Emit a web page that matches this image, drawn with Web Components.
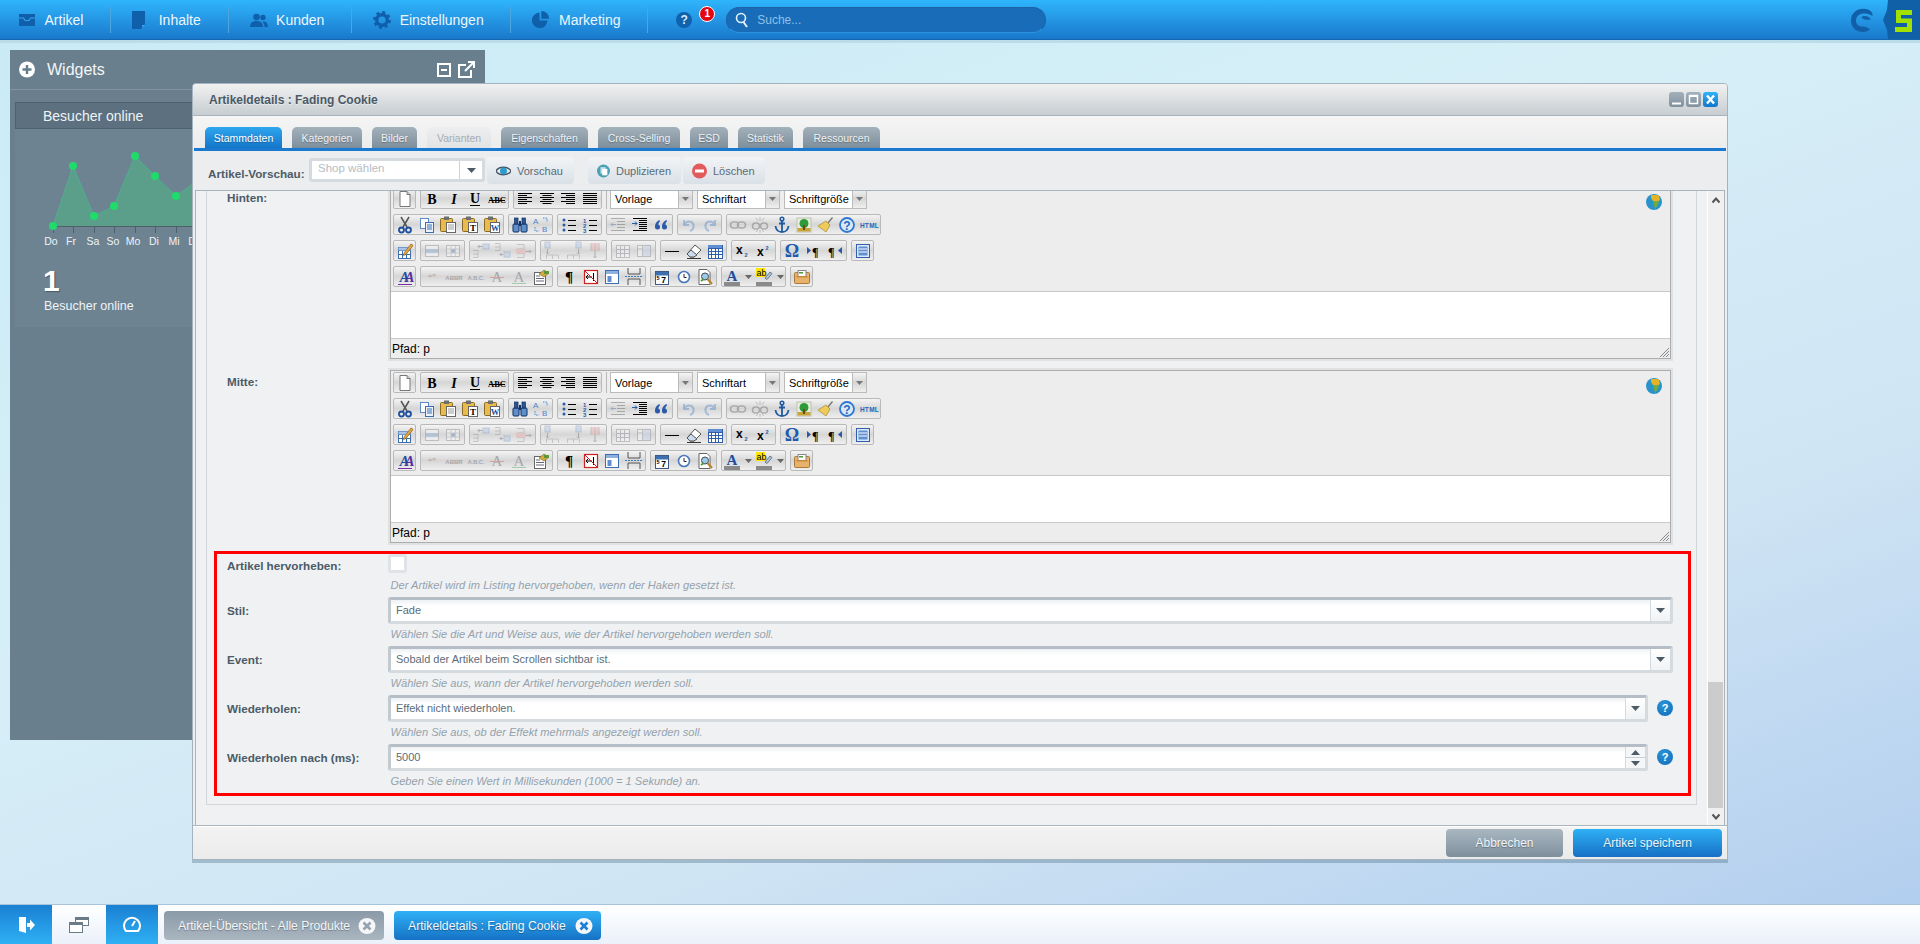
<!DOCTYPE html>
<html lang="de"><head><meta charset="utf-8"><title>Artikeldetails</title>
<style>
html,body{margin:0;height:944px;overflow:hidden}
body{display:flex;flex-direction:column;font-family:"Liberation Sans",Arial,sans-serif;font-size:11px;background:linear-gradient(160deg,#c9ebf6 0%,#d6eff7 40%,#d0e5f4 68%,#b0ccee 100%)}
</style></head><body>
<sw-topbar></sw-topbar>
<sw-desktop>
  <sw-widgets></sw-widgets>
  <sw-window heading="Artikeldetails : Fading Cookie">
    <sw-tabs slot="tabs"></sw-tabs>
    <sw-previewbar slot="toolbar"></sw-previewbar>
    <sw-fieldset>
      <sw-editor-row label="Hinten:"><sw-editor></sw-editor></sw-editor-row>
      <sw-editor-row label="Mitte:"><sw-editor></sw-editor></sw-editor-row>
      <sw-highlight>
        <sw-field kind="check" label="Artikel hervorheben:" hint="Der Artikel wird im Listing hervorgehoben, wenn der Haken gesetzt ist."></sw-field>
        <sw-field kind="select" label="Stil:" value="Fade" hint="Wählen Sie die Art und Weise aus, wie der Artikel hervorgehoben werden soll."></sw-field>
        <sw-field kind="select" label="Event:" value="Sobald der Artikel beim Scrollen sichtbar ist." hint="Wählen Sie aus, wann der Artikel hervorgehoben werden soll."></sw-field>
        <sw-field kind="select" help label="Wiederholen:" value="Effekt nicht wiederholen." hint="Wählen Sie aus, ob der Effekt mehrmals angezeigt werden soll."></sw-field>
        <sw-field kind="number" help label="Wiederholen nach (ms):" value="5000" hint="Geben Sie einen Wert in Millisekunden (1000 = 1 Sekunde) an."></sw-field>
      </sw-highlight>
    </sw-fieldset>
  </sw-window>
</sw-desktop>
<sw-taskbar></sw-taskbar>
<script>
const FONT='"Liberation Sans",Arial,sans-serif';
function el(name,css,html,init){customElements.define(name,class extends HTMLElement{
  connectedCallback(){ if(this.shadowRoot)return; const r=this.attachShadow({mode:'open'});
    r.innerHTML=`<style>${css}</style>`+(typeof html==='function'?html(this):html); if(init)init(this,r);} });}

/* ---------- top bar ---------- */
const NAVC='#0f5fab';
const NAV={
 tray:`<svg width="18" height="14" viewBox="0 0 18 14"><path d="M1 1h16v12H1z" fill="${NAVC}"/><path d="M1 5h4.500l1.500 2.500h4L12.500 5H17" fill="none" stroke="#3a9fe8" stroke-width="1.200"/></svg>`,
 page:`<svg width="14" height="18" viewBox="0 0 14 18"><path d="M0 0h13v13l-4 5H0z" fill="${NAVC}"/><path d="M13 14h-3v3z" fill="#3a9fe8"/></svg>`,
 users:`<svg width="18" height="14" viewBox="0 0 18 14"><circle cx="6.500" cy="4" r="3.300" fill="${NAVC}"/><path d="M0 14c0-4 2.500-6 6.500-6s6.500 2 6.500 6z" fill="${NAVC}"/><circle cx="13" cy="4.500" r="2.700" fill="${NAVC}"/><path d="M13.500 8.500c3 0 4.500 2 4.500 5.500h-3.500c0-2-.5-4-1.800-5z" fill="${NAVC}"/></svg>`,
 gear:`<svg width="18" height="18" viewBox="0 0 18 18"><circle cx="9" cy="9" r="5.300" fill="none" stroke="${NAVC}" stroke-width="3.400"/><circle cx="9" cy="9" r="7.600" fill="none" stroke="${NAVC}" stroke-width="2.600" stroke-dasharray="3 2.970"/></svg>`,
 pie:`<svg width="17" height="17" viewBox="0 0 17 17"><path d="M7.500 1.500V9.500H15.500A7.800 7.800 0 1 1 7.500 1.500z" fill="${NAVC}"/><path d="M9.300 0A7.800 7.800 0 0 1 17 7.800H9.300z" fill="${NAVC}"/></svg>`};
el('sw-nav-item',`:host{display:flex;align-items:center;height:26px;padding:0 26.800px 0 21px;border-right:1px solid #4fa5e0;color:#edf6fd;font-size:14px}
 :host(:first-child){padding-left:18px}
 i{display:flex;width:26.500px;align-items:center;flex:none}`,
 t=>`<i>${NAV[t.getAttribute('icon')]}</i><span><slot></slot></span>`);
el('sw-topbar',`:host{display:block;height:43px;flex:none;font-family:${FONT}}
 .bar{height:39px;display:flex;align-items:center;background:linear-gradient(#2fb5fc,#1a78cb);border-bottom:1px solid #1267b0}
 .band{height:3px;background:#bcdcea}
 .help{margin-left:28px;width:16px;height:16px;border-radius:50%;background:#0f62ad;color:#dcecf9;font:bold 12px/16px ${FONT};text-align:center;flex:none}
 .badge{margin:-11px 0 0 7px;width:14px;height:14px;border-radius:50%;background:#e30613;border:1px solid #fff;color:#fff;font:bold 10px/14px ${FONT};text-align:center;flex:none}
 .search{margin-left:11px;width:320px;height:26px;box-sizing:border-box;border-radius:13px;background:#186cb8;border:1px solid #1c63a8;border-bottom-color:#2d92e4;display:flex;align-items:center;color:#8fc0e8;font-size:12px;flex:none}
 .search svg{margin:0 8px 0 8px}
 .logo{margin-left:auto;display:flex;align-items:center;height:39px}
 .s5{margin-left:7px}`,
 `<div class="bar">
  <sw-nav-item icon="tray">Artikel</sw-nav-item><sw-nav-item icon="page">Inhalte</sw-nav-item><sw-nav-item icon="users">Kunden</sw-nav-item><sw-nav-item icon="gear">Einstellungen</sw-nav-item><sw-nav-item icon="pie">Marketing</sw-nav-item>
  <div class="help">?</div><div class="badge">1</div>
  <div class="search"><svg width="14" height="16" viewBox="0 0 14 16"><circle cx="6" cy="6" r="4.500" fill="none" stroke="#e6f2fb" stroke-width="1.600"/><path d="M8.500 10l3.500 5" stroke="#e6f2fb" stroke-width="2"/></svg>Suche...</div>
  <div class="logo"><svg width="25" height="24" viewBox="0 0 25 24"><path d="M17 1.500C8 -1 0 4 0 12.500c0 7 5.500 11.500 12 11.500 3 0 5-1 7-2.500-2-1.800-5-3-8-3-4 0-6-2.500-6-6 0-4 3.500-7 7.500-7 3 0 6 .5 9 2.500 .5-3-1.500-5.500-4.500-6.500zM11 8.500c3-1.500 7 0 8.500 2.500.5 1-3 1-5.500.5-2.500-.5-4.500-2-3-3z" fill="#115fa9"/></svg>
  <svg class="s5" width="37" height="39" viewBox="0 0 37 39"><path d="M5 0h32v39H5l-1-9-4-10 4-10z" fill="#1060a8"/><path d="M13 10H29V15H18V18.500H29V32H12V27H24V23H13Z" fill="#a2e000"/></svg></div>
 </div><div class="band"></div>`);

/* ---------- desktop ---------- */
el('sw-desktop',`:host{display:block;flex:1;position:relative;min-height:0}`,`<slot></slot>`);

/* ---------- widgets ---------- */
el('sw-widgets',`:host{position:absolute;left:10px;top:7px;width:475px;height:690px;background:#697f8e;color:#fff;font-family:${FONT}}
 header{height:39px;border-bottom:1px solid #81939f;display:flex;align-items:center;padding:0 10px 0 9px;font-size:16px;color:#f2f6f8}
 header .t{margin-left:12px;flex:1}
 header svg{display:block}
 .in{margin:12px 5px 0;height:225px;background:#6d8392}
 .sub{height:27px;box-sizing:border-box;background:#5c707f;border:1px solid #4e616e;line-height:27px;padding-left:27px;font-size:14px;color:#eef3f6}
 svg.c{display:block}
 .n{font:bold 30px/30px ${FONT};padding-left:28px;margin-top:17px;text-shadow:1px 1px 1px rgba(30,50,70,.5)}
 .l{font-size:12.500px;line-height:14px;padding-left:29px;margin-top:3px;color:#eef3f6}`,
 ()=>{const p=[[38,97],[58,37],[79,87],[99,77],[120,27],[140,47],[161,67],[182,52],[202,67],[224,40],[245,85]];
  const lab=['Do','Fr','Sa','So','Mo','Di','Mi','Do','Fr','Sa','So'],lx=[36,56,78,98,118,139,159,180,200,222,243];
  const pts=p.map(a=>a.join(',')).join(' ');
  return `<header><svg width="16" height="17" viewBox="0 0 16 17"><circle cx="8" cy="8.500" r="8" fill="#fff"/><path d="M8 4v9M3.500 8.500h9" stroke="#667d8c" stroke-width="2.400"/></svg><span class="t">Widgets</span>
  <svg width="14" height="14" viewBox="0 0 14 14" style="margin-right:7px"><rect x="1" y="1" width="12" height="12" fill="none" stroke="#fff" stroke-width="2"/><path d="M4 7h6" stroke="#fff" stroke-width="2"/></svg>
  <svg width="17" height="17" viewBox="0 0 17 17"><path d="M8 4H1v12h12V9" fill="none" stroke="#fff" stroke-width="2"/><path d="M7 10l8-8M10 1h6v6" fill="none" stroke="#fff" stroke-width="2"/></svg></header>
  <div class="in"><div class="sub">Besucher online</div>
  <svg class="c" width="465" height="120" viewBox="0 0 465 120"><polygon points="38,97 ${pts} 245,97" fill="#5b9f8a"/><polyline points="${pts}" fill="none" stroke="#4fae8e"/>
  <path d="M38 97.500H300" stroke="#4d5f6b"/>${p.map(a=>`<path d="M${a[0]+.5} 97V104" stroke="#4d5f6b"/>`).join('')}
  ${p.map(a=>`<circle cx="${a[0]}" cy="${a[1]}" r="4" fill="#1edb6a"/>`).join('')}
  ${lab.map((t,i)=>`<text x="${lx[i]}" y="116" text-anchor="middle" font-size="10.500" fill="#eef3f6" font-family="Liberation Sans">${t}</text>`).join('')}</svg>
  <div class="n">1</div><div class="l">Besucher online</div></div>`});

/* ---------- window ---------- */
const WB=`width:15px;height:15px;border-radius:3px;display:flex;align-items:center;justify-content:center`;
el('sw-window',`:host{position:absolute;left:192px;top:40px;width:1536px;height:777px;box-sizing:border-box;border:1px solid #a3b3bf;border-radius:4px 4px 0 0;background:#eceef0;box-shadow:0 3px 0 rgba(60,95,120,.32);display:flex;flex-direction:column;font-family:${FONT}}
 .ti{height:32px;box-sizing:border-box;flex:none;display:flex;align-items:center;padding:0 9px 0 16px;background:linear-gradient(#f1f1f1,#c7cdd1);border-bottom:1px solid #a9b5be;font:bold 12px ${FONT};color:#4a5965;border-radius:3px 3px 0 0;text-shadow:0 1px 0 rgba(255,255,255,.5)}
 .ti span{flex:1}
 .ti div{margin-left:2px}
 .m{${WB};background:linear-gradient(#a3b1bc,#7f909d)}
 .x{${WB};background:linear-gradient(#2fb2fb,#1076cd);color:#fff}
 .body{flex:1;min-height:0;display:flex;margin:0 2px 0 2px;border:1px solid #a9b5be;border-bottom:0;background:#f0f1f3}
 .sc{flex:1;min-width:0;overflow:hidden;padding:0 10px}
 .bar{width:17px;flex:none;display:flex;flex-direction:column;border-left:1px solid #fff;background:#f0f0f0;box-sizing:border-box}
 .bar .ar{height:17px;display:flex;align-items:center;justify-content:center;flex:none}
 .bar .tr{flex:1;display:flex;flex-direction:column;justify-content:flex-end}
 .bar .th{height:126px;background:#ccc;margin-right:1px}
 .ft{height:34px;box-sizing:border-box;flex:none;border-top:1px solid #a9b5be;background:linear-gradient(#f3f3f4,#ebebec);box-shadow:inset 0 1px 0 #fff;display:flex;justify-content:flex-end;align-items:center;padding:1px 5px 0 0}
 .b{height:28px;border-radius:4px;color:#eef5fb;font-size:12px;display:flex;align-items:center;justify-content:center;text-shadow:0 1px 1px rgba(0,0,0,.3)}
 .ab{width:117px;background:linear-gradient(#aab7c1,#7e8f9c);margin-right:10px}
 .sv{width:149px;background:linear-gradient(#2fb0f5,#1670c5)}`,
 t=>`<div class="ti"><span>${t.getAttribute('heading')}</span>
 <div class="m"><svg width="11" height="11"><path d="M1 9.500h9" stroke="#fff" stroke-width="2"/></svg></div>
 <div class="m"><svg width="11" height="11"><rect x="1.500" y="1.500" width="8" height="8" fill="none" stroke="#fff" stroke-width="1.500"/><path d="M1 2h9" stroke="#fff" stroke-width="2"/></svg></div>
 <div class="x"><svg width="11" height="11"><path d="M2 1.500l7 8M9 1.500l-7 8" stroke="#fff" stroke-width="2.400"/></svg></div></div>
 <slot name="tabs"></slot><slot name="toolbar"></slot>
 <div class="body"><div class="sc"><slot></slot></div>
  <div class="bar"><div class="ar"><svg width="10" height="8"><path d="M1.500 6.500L5 2.500l3.500 4" fill="none" stroke="#555" stroke-width="2"/></svg></div><div class="tr"><div class="th"></div></div><div class="ar"><svg width="10" height="8"><path d="M1.500 1.500L5 5.500l3.500-4" fill="none" stroke="#555" stroke-width="2"/></svg></div></div></div>
 <div class="ft"><div class="b ab">Abbrechen</div><div class="b sv">Artikel speichern</div></div>`);

el('sw-tab',`:host{display:block;height:21px;box-sizing:border-box;text-align:center;line-height:23px;font-size:10.500px;border-radius:5px 5px 0 0;color:#eef2f5;background:linear-gradient(#a3b1bb,#7d8e9b);text-shadow:0 1px 1px rgba(0,0,0,.25);flex:none}
 :host([active]){background:linear-gradient(#2ea6f0,#1476c8);color:#fff}
 :host([disabled]){background:linear-gradient(#eceeef,#e1e3e5);color:#a6adb3;text-shadow:none}`,`<slot></slot>`);
el('sw-tabs',`:host{display:flex;height:35px;box-sizing:border-box;flex:none;background:linear-gradient(#f5f5f5,#eaebec);padding-top:11px}
 .s{display:flex;gap:10px;padding-left:11px;margin:0 1px;border-bottom:3px solid #1a7ad0;flex:1;height:21px}`,
 `<div class="s"><sw-tab active style="width:77px">Stammdaten</sw-tab><sw-tab style="width:70px">Kategorien</sw-tab><sw-tab style="width:45px">Bilder</sw-tab><sw-tab disabled style="width:64px">Varianten</sw-tab><sw-tab style="width:87px">Eigenschaften</sw-tab><sw-tab style="width:82px">Cross-Selling</sw-tab><sw-tab style="width:38px">ESD</sw-tab><sw-tab style="width:55px">Statistik</sw-tab><sw-tab style="width:77px">Ressourcen</sw-tab></div>`);

el('sw-tool-btn',`:host{display:flex;align-items:center;height:27px;box-sizing:border-box;padding:0 10px 0 9px;border-radius:4px;background:linear-gradient(#f2f4f6,#d9e0e7);color:#5a6b78;font-size:11px}
 ::slotted(svg){margin-right:6px}`,`<slot name="i"></slot><slot></slot>`);
el('sw-previewbar',`:host{display:flex;height:39px;flex:none;box-sizing:border-box;background:#ecedef;padding:6px 0 0 15px;align-items:flex-start;font-family:${FONT}}
 .lb{font:bold 11.700px/14px ${FONT};color:#4d5c68;margin-top:10px;width:101px;white-space:nowrap}
 .co{width:176px;height:24px;margin-top:1px;box-sizing:border-box;border:3px solid #d5dadf;border-radius:3px;background:#fff;display:flex;color:#b5bdc4;font-size:11.500px;line-height:15px}
 .co span{flex:1;padding-left:6px}
 .co i{width:22px;border-left:1px solid #ccd2d8;display:flex;align-items:center;justify-content:center}
 sw-tool-btn{flex:none}`,
 `<div class="lb">Artikel-Vorschau:</div><div class="co"><span>Shop wählen</span><i><svg width="9" height="5"><path d="M0 0h9L4.500 5z" fill="#4d5b66"/></svg></i></div>
 <sw-tool-btn style="margin-left:2px;width:87px"><svg slot="i" width="15" height="12" viewBox="0 0 15 12"><path d="M0 6c3-5 12-5 15 0-3 5-12 5-15 0z" fill="none" stroke="#44525e" stroke-width="1.300"/><circle cx="7.500" cy="6" r="3.500" fill="#2e9bd0"/></svg>Vorschau</sw-tool-btn>
 <sw-tool-btn style="margin-left:14px;width:93px"><svg slot="i" width="15" height="18" viewBox="0 0 15 18"><circle cx="7.500" cy="9" r="7.500" fill="#4aa1b4"/><rect x="4" y="4.500" width="6" height="7.500" fill="#bfe0e8"/><rect x="6" y="6.500" width="6" height="7.500" fill="#fff"/></svg>Duplizieren</sw-tool-btn>
 <sw-tool-btn style="margin-left:2px;width:82px"><svg slot="i" width="15" height="18" viewBox="0 0 15 18"><circle cx="7.500" cy="9" r="7.500" fill="#e25a5c"/><rect x="3" y="7.500" width="9" height="3" fill="#fff"/></svg>Löschen</sw-tool-btn>`);

/* ---------- form ---------- */
el('sw-fieldset',`:host{display:block;margin-top:-8px;border:1px solid #d2d5d9;width:1491px;box-sizing:border-box;padding-top:0;font-family:${FONT}}`,`<slot></slot>`);
el('sw-editor-row',`:host{display:grid;grid-template-columns:181px 1fr;margin:0 23px 7px 0}
 :host(:first-child){margin-top:0}
 label{font:bold 11.700px/14px ${FONT};color:#4b5b68;padding:7px 0 0 20px}`,
 t=>`<label>${t.getAttribute('label')}</label><slot></slot>`);
el('sw-highlight',`:host{display:block;margin:-1px 5px 8px 7px;border:3px solid #f00;padding:0 15px 0 10px}`,`<slot></slot>`);
el('sw-field',`:host{display:grid;grid-template-columns:161px 1fr;align-content:start;height:49px;font-size:11px}
 :host([kind=check]){height:43px}
 label{font:bold 11.700px/28px ${FONT};color:#4b5b68;white-space:nowrap}
 :host([kind=check]) label{line-height:24px}
 .r{display:flex;align-items:flex-start}
 .ctl{flex:1;height:27px;box-sizing:border-box;border:3px solid;border-color:#b5bec6 #d5dadf #d5dadf #c2cad0;border-radius:3px;display:flex;background:#fff}
 .in{flex:1;background:linear-gradient(#eef1f3,#fff 6px);padding-left:5px;line-height:20px;color:#5c6c79;font-size:11px}
 .tr{width:19px;display:flex;align-items:center;justify-content:center;border-left:1px solid #d5dadf;background:linear-gradient(#fff,#f0f2f4);flex:none}
 .sp{width:19px;display:flex;flex-direction:column;border-left:1px solid #d5dadf;flex:none}
 .sp div{flex:1;display:flex;align-items:center;justify-content:center;background:#f5f6f7}
 .sp div+div{border-top:1px solid #c8ced3}
 .help{width:16px;height:16px;margin:5px 0 0 9px;flex:none;border-radius:50%;background:radial-gradient(circle at 40% 30%,#2b93d8,#0f6bb5);color:#fff;font:bold 11px/16px ${FONT};text-align:center}
 .ck{width:19px;height:19px;box-sizing:border-box;border:3px solid #dfe3e7;border-radius:3px;background:#fff}
 .h{grid-column:2;font-style:italic;color:#94a2ad;line-height:14px;margin-top:2px;padding-left:2.500px;font-size:11.100px}
 :host([kind=check]) .h{margin-top:0}`,
 t=>{const k=t.getAttribute('kind'),a=`<svg width="9" height="5"><path d="M0 0h9L4.500 5z" fill="#4d5b66"/></svg>`;
  const c=k==='check'?`<div class="ck"></div>`:`<div class="ctl"><div class="in">${t.getAttribute('value')}</div>`+(k==='select'?`<div class="tr">${a}</div>`:`<div class="sp"><div><svg width="9" height="5"><path d="M0 5h9L4.500 0z" fill="#4d5b66"/></svg></div><div>${a}</div></div>`)+`</div>`;
  return `<label>${t.getAttribute('label')}</label><div class="r">${c}${t.hasAttribute('help')?'<div class="help">?</div>':''}</div><div class="h">${t.getAttribute('hint')}</div>`});

/* ---------- editor icons ---------- */
const ff='font-family="Liberation Sans"', fs='font-family="Liberation Serif"';
const tx=(x,y,s,t,c='#000',x2='')=>`<text x="${x}" y="${y}" font-size="${s}" fill="${c}" ${ff} ${x2}>${t}</text>`;
const ln=(y,a,b,c='#000')=>`<path d="M${a} ${y+.5}H${b}" stroke="${c}"/>`;
const ali=(m,w)=>[4,6,8,10,12,14].map((y,i)=>{const l=i%2?w:14;const x=m==='c'?3+(14-l)/2:m==='r'?17-l:3;return ln(y,x,x+l)}).join('');
const clip=(inner='')=>`<rect x="2.500" y="3.500" width="12" height="13" rx="1" fill="#e8bb4c" stroke="#8a6a25"/><rect x="6" y="1.500" width="5" height="3.500" fill="#6e6e6e"/><rect x="8.500" y="7.500" width="9" height="10" fill="#fff" stroke="#666"/>${inner}`;
const grid=(x,y,w,h,c,n=3,m=3)=>{let s=`<rect x="${x+.5}" y="${y+.5}" width="${w}" height="${h}" fill="#fff" stroke="${c}"/>`;for(let i=1;i<n;i++)s+=`<path d="M${(x+i*w/n|0)+.5} ${y}v${h}" stroke="${c}"/>`;for(let i=1;i<m;i++)s+=`<path d="M${x} ${(y+i*h/m|0)+.5}h${w}" stroke="${c}"/>`;return s};
const ICON={
 doc:`<path d="M5 2.500h7l3 3v12H5z" fill="#fff" stroke="#777"/><path d="M12 2.500v3h3" fill="#ddd" stroke="#777"/>`,
 b:`<text x="10" y="15" text-anchor="middle" font-size="14" font-weight="bold" ${fs}>B</text>`,
 i:`<text x="10" y="15" text-anchor="middle" font-size="14" font-weight="bold" font-style="italic" ${fs}>I</text>`,
 u:`<text x="10" y="14" text-anchor="middle" font-size="14" font-weight="bold" ${fs}>U</text><path d="M5 16.500h10" stroke="#000"/>`,
 s:`<text x="10" y="14" text-anchor="middle" font-size="8.500" font-weight="bold" ${fs}>ABC</text><path d="M2 11.500h16" stroke="#000"/>`,
 al:ali('l',9),ac:ali('c',9),ar:ali('r',9),aj:ali('l',14),
 cut:`<path d="M6 2l6 10M14 2L8 12" stroke="#555" stroke-width="1.500"/><circle cx="6.500" cy="15" r="2.500" fill="none" stroke="#1d4f9e" stroke-width="1.800"/><circle cx="13.500" cy="15" r="2.500" fill="none" stroke="#1d4f9e" stroke-width="1.800"/>`,
 copy:`<rect x="3.500" y="3.500" width="8" height="10" fill="#fff" stroke="#5d8ac4"/><rect x="8.500" y="7.500" width="8" height="10" fill="#eaf2fb" stroke="#3d6eb0"/><path d="M10 10h5M10 12h5M10 14h5" stroke="#3d6eb0"/>`,
 paste:clip(`<path d="M10 10h6M10 12h6M10 14h6" stroke="#999"/>`),
 pastet:clip(`<text x="13" y="16" text-anchor="middle" font-size="9" font-weight="bold" ${fs}>T</text>`),
 pastew:clip(`<text x="13" y="16" text-anchor="middle" font-size="8.500" font-weight="bold" fill="#1d4f9e" ${fs}>W</text>`),
 find:`<rect x="3" y="9" width="6" height="8" rx="1" fill="#5f8fc8" stroke="#0f2f66"/><rect x="11" y="9" width="6" height="8" rx="1" fill="#5f8fc8" stroke="#0f2f66"/><rect x="4.500" y="3" width="3.500" height="6" fill="#2a5590" stroke="#0f2f66" stroke-width=".7"/><rect x="12" y="3" width="3.500" height="6" fill="#2a5590" stroke="#0f2f66" stroke-width=".7"/><rect x="9" y="6" width="2" height="5" fill="#0f2f66"/>`,
 replace:tx(2,9,8,'A','#4a86d0')+tx(11,17,8,'B','#4a86d0')+`<path d="M12 3h4v4M4 12v4h4" fill="none" stroke="#4a86d0" stroke-dasharray="1.500 1"/>`,
 bul:[5,10,15].map(y=>`<circle cx="5" cy="${y}" r="1.500" fill="#2a5aa8"/>`+ln(y,9,17)).join(''),
 num:[1,2,3].map((n,i)=>tx(3,8+i*5,6,n,'#2a5aa8','font-weight="bold"')+ln(5+i*5,9,17)).join(''),
 out:[3,6,9,12,15].map((y,i)=>ln(y,i==0||i==4?3:9,17,'#444')).join('')+`<path d="M8 9.500H3l2-2M3 9.500l2 2" fill="none" stroke="#2a5aa8"/>`,
 ind:[3,5,7,9,11,13,15].map((y,i)=>ln(y,i==0||i==6?3:9,17)).join('')+`<path d="M2 8.500h5l-2-2M7 8.500l-2 2" fill="none" stroke="#2a5aa8"/>`,
 quote:[4,11].map(x=>`<g transform="translate(${x} 5)"><circle cx="2.500" cy="7" r="2.500" fill="#2a5aa8"/><path d="M0 7C0 3 2 1 4.500 0L5 1.500C3.500 2.500 3 4 3.500 6z" fill="#2a5aa8"/></g>`).join(''),
 undo:`<path d="M5 5v5h5M5.500 9.500c2-4 8-4 9 .5.500 3-1 5-3.500 6" fill="none" stroke="#3d78c8" stroke-width="2"/>`,
 redo:`<path d="M15 5v5h-5M14.500 9.500c-2-4-8-4-9 .5-.5 3 1 5 3.500 6" fill="none" stroke="#3d78c8" stroke-width="2"/>`,
 link:`<rect x="2.500" y="7" width="8" height="6" rx="3" fill="none" stroke="#555" stroke-width="1.500"/><rect x="9.500" y="7" width="8" height="6" rx="3" fill="none" stroke="#555" stroke-width="1.500"/>`,
 unlink:`<rect x="2.500" y="8" width="7" height="6" rx="3" fill="none" stroke="#555" stroke-width="1.500"/><rect x="10.500" y="8" width="7" height="6" rx="3" fill="none" stroke="#555" stroke-width="1.500"/><path d="M10 2v4M6 3l2 3M14 3l-2 3M10 15v3M6 17l2-2M14 17l-2-2" stroke="#777"/>`,
 anchor:`<circle cx="10" cy="4" r="1.800" fill="none" stroke="#1d5a9e" stroke-width="1.500"/><path d="M10 6v11M7 8.500h6" stroke="#1d5a9e" stroke-width="1.800"/><path d="M3.500 11c.5 4 3 6 6.500 6s6-2 6.500-6" fill="none" stroke="#1d5a9e" stroke-width="1.800"/>`,
 image:`<rect x="3" y="3" width="14" height="14" fill="#e9eedc" stroke="#b8c4b0"/><rect x="3.500" y="13" width="13" height="3.500" fill="#c9a23a"/><circle cx="10" cy="8.500" r="4.500" fill="#2f9a3a"/><path d="M10 10v5" stroke="#6a4a1a" stroke-width="2"/>`,
 clean:`<path d="M12 8l5-6 1 1-5 6z" fill="#777"/><path d="M11 6l4 4-4 7-8-6z" fill="#eecb5a" stroke="#a88a2a" stroke-width=".7"/>`,
 help:`<circle cx="10" cy="10" r="7" fill="#d8e8f8" stroke="#2f78d0" stroke-width="1.800"/><text x="10" y="14.500" text-anchor="middle" font-size="12" font-weight="bold" fill="#2468c0" ${ff}>?</text>`,
 html:`<text x="10.500" y="13" text-anchor="middle" font-size="6.500" font-weight="bold" fill="#2a66b8" ${ff} letter-spacing=".3">HTML</text>`,
 tabedit:grid(3,6,12,11,'#3d6eb0')+`<rect x="3.500" y="6.500" width="12" height="3" fill="#a9c4e8"/><path d="M9 12l7-9 2 1.500-7 9-2.500 1z" fill="#e8a93c" stroke="#8a5a20" stroke-width=".7"/>`,
 trow:`<rect x="3.500" y="4.500" width="13" height="11" fill="#fff" stroke="#778"/><rect x="4" y="8" width="12" height="4" fill="#7a9cd0"/>`,
 tcell:`<rect x="3.500" y="4.500" width="13" height="11" fill="#fff" stroke="#778"/><rect x="8" y="8" width="4.500" height="4" fill="#4a74b8"/><path d="M4 8h12M4 12h12M8 5v10M12.500 5v10" stroke="#aab"/>`,
 irb:`<path d="M2 9.500h5v7H2M2 13h5" fill="none" stroke="#888"/><path d="M11 5.500H7m1.500-1.500L7 5.500 8.500 7" fill="none" stroke="#555"/><rect x="12" y="3" width="6" height="5" fill="#a9c4e8" stroke="#6a8ac0"/>`,
 ira:`<path d="M2 2.500h5v7H2M2 6h5" fill="none" stroke="#888"/><path d="M10 13.500H7m1.500-1.500L7 13.500 8.500 15" fill="none" stroke="#555"/><rect x="11" y="11" width="6" height="5" fill="#a9c4e8" stroke="#6a8ac0"/>`,
 drow:`<path d="M3 3.500h7v13H3M3 8h7M3 12.500h7" fill="none" stroke="#888"/><rect x="2" y="8" width="10" height="4.500" fill="#f0a0a0"/><path d="M12 10.500h5l-1.500-1.500M17 10.500L15.500 12" fill="none" stroke="#555"/>`,
 icb:`<rect x="3" y="1" width="5" height="6" fill="#a9c4e8" stroke="#6a8ac0"/><path d="M5.500 8v5m-1.500-1.500l1.500 1.500L7 11.500" fill="none" stroke="#555"/><path d="M4.500 18v-4h12v4M10.500 14v4" fill="none" stroke="#888"/>`,
 ica:`<rect x="12" y="1" width="5" height="6" fill="#a9c4e8" stroke="#6a8ac0"/><path d="M14.500 8v5M13 11.500l1.500 1.500 1.500-1.500" fill="none" stroke="#555"/><path d="M3.500 18v-4h12v4M9.500 14v4" fill="none" stroke="#888"/>`,
 dcol:`<path d="M6 2h8v8H6z" fill="#f0a0a0"/><path d="M6 2v8M10 2v8M14 2v8" stroke="#888"/><path d="M10 10v7M8.500 15.500L10 17l1.500-1.500" fill="none" stroke="#555"/>`,
 merge:grid(3,4,13,12,'#778',3,3),
 split:`<rect x="3.500" y="4.500" width="13" height="11" fill="#bcd0ec" stroke="#778"/><rect x="4" y="5" width="4" height="10" fill="#fff"/><path d="M8.500 5v10M4 8h4" stroke="#889"/>`,
 hr:`<path d="M3 10.500h14" stroke="#000"/>`,
 erase:`<path d="M3 13l8-9 6 5-7 7H6z" fill="#fff" stroke="#555"/><path d="M3 13l4-4 6 5-3 2H6z" fill="#c9dcf0" stroke="#555"/><path d="M3 17.500h14" stroke="#333"/>`,
 table:grid(3,4,14,13,'#2f5fa8',4,4)+`<rect x="3" y="4" width="14" height="3" fill="#5f8fd0"/>`,
 sub:tx(3,13,12,'x','#000','font-weight="bold"')+tx(11.500,16,5.500,'2','#2a5aa8','font-weight="bold"'),
 sup:tx(3,15,12,'x','#000','font-weight="bold"')+tx(11.500,9,5.500,'2','#2a5aa8','font-weight="bold"'),
 omega:`<text x="10" y="16" text-anchor="middle" font-size="18" font-weight="bold" fill="#1d5ab0" ${fs}>Ω</text>`,
 ltr:`<path d="M3 6l4 3.500-4 3.500z" fill="#2a5aa8"/><text x="8" y="15" font-size="12" font-weight="bold" ${fs}>¶</text>`,
 rtl:`<text x="3" y="15" font-size="12" font-weight="bold" ${fs}>¶</text><path d="M17 6l-4 3.500 4 3.500z" fill="#2a5aa8"/>`,
 full:`<rect x="3.500" y="3.500" width="13" height="13" fill="#dce8f7" stroke="#2f5fa8"/><rect x="5.500" y="5.500" width="9" height="9" fill="#5f8fd0"/><path d="M6 8h8M6 11h8" stroke="#fff"/>`,
 styles:`<text x="10" y="15" text-anchor="middle" font-size="14" font-weight="bold" font-style="italic" fill="#1d4f9e" letter-spacing="-4" ${fs}>A<tspan fill="#5a2a9e">A</tspan></text><path d="M3 17.500h14" stroke="#7a2aa8"/>`,
 cite:`<text x="10" y="13" text-anchor="middle" font-size="8" font-weight="bold" fill="#555" ${fs}>“”</text>`,
 abbr:`<text x="10" y="13" text-anchor="middle" font-size="6" font-weight="bold" fill="#445" ${ff}>ABBR</text>`,
 acr:`<text x="10" y="13" text-anchor="middle" font-size="5.500" font-weight="bold" fill="#445" ${ff}>A.B.C.</text>`,
 del:`<text x="10" y="15" text-anchor="middle" font-size="15" fill="#445" ${fs}>A</text><path d="M3 10.500h14" stroke="#d04040"/>`,
 ins:`<text x="10" y="15" text-anchor="middle" font-size="15" fill="#445" ${fs}>A</text><path d="M3 16.500h14" stroke="#2f9a3a"/>`,
 attr:`<rect x="3.500" y="5.500" width="11" height="12" fill="#fff" stroke="#666"/><path d="M5 9h4M5 11.500h8M5 14h8" stroke="#667"/><path d="M8 7l5-4 5 3-5 4z" fill="#d8a83a" stroke="#7a7a3a" stroke-width=".7"/><rect x="13" y="4" width="5" height="3" fill="#5a9a3a"/>`,
 para:`<text x="10" y="15" text-anchor="middle" font-size="15" font-weight="bold" ${fs}>¶</text>`,
 nbsp:`<rect x="3.500" y="3.500" width="13" height="13" fill="#fff" stroke="#d02020" stroke-width="1.200"/><path d="M5 10h6M5 10l2-2M5 10l2 2M12.500 6v8" stroke="#000" fill="none"/><path d="M4 4l12 12" stroke="#d02020"/>`,
 layer:`<rect x="3.500" y="3.500" width="13" height="13" fill="#fff" stroke="#3d6eb0"/><rect x="4" y="4" width="12" height="3" fill="#8eb0dc"/><rect x="5.500" y="9" width="4" height="6" fill="#5f8fd0"/>`,
 pb:`<path d="M4 1v6h12V1M4 18v-6h12v6" fill="none" stroke="#555"/><path d="M1 9.500h18" stroke="#3d78c8" stroke-dasharray="2 1"/>`,
 date:`<rect x="3.500" y="4.500" width="13" height="13" fill="#fff" stroke="#3d5a80"/><rect x="4" y="5" width="12" height="3.500" fill="#3d6eb0"/><text x="11.500" y="16" text-anchor="middle" font-size="8.500" font-weight="bold" ${ff}>7</text><text x="6" y="13" text-anchor="middle" font-size="5.500" font-weight="bold" ${ff}>5</text>`,
 time:`<circle cx="10" cy="10" r="5.500" fill="#fff" stroke="#4a78b8" stroke-width="1.600"/><path d="M10 7v3.500h2.500" fill="none" stroke="#223"/>`,
 prev:`<path d="M4 2.500h8l3 3v12H4z" fill="#fff" stroke="#666"/><circle cx="10" cy="9.500" r="3.500" fill="#9ccbe8" stroke="#445"/><path d="M12.500 12l4.500 5" stroke="#b8862a" stroke-width="2.200"/><path d="M6 14l3-2" stroke="#4a9a3a" stroke-width="2"/>`,
 media:`<rect x="2.500" y="5.500" width="15" height="11" rx="1" fill="#e9b26a" stroke="#a87a3a"/><rect x="6" y="3.500" width="8" height="6" fill="#fff" stroke="#888"/><rect x="4.500" y="9" width="11" height="1.500" fill="#c9883a"/><rect x="7" y="5" width="4" height="1.500" fill="#4a9a3a"/>`
};
const FORE=`<text x="9" y="14" text-anchor="middle" font-size="15" font-weight="bold" fill="#1d4f9e" ${fs}>A</text><rect x="1" y="15" width="16" height="4" fill="#8a8a8a"/>`;
const HILI=`<rect x="1" y="1" width="9" height="9" fill="#ffe600"/>`+tx(1.500,9,9,'ab')+`<path d="M10 11l5-6 2 1.500-5 6z" fill="#a9c4e8" stroke="#555" stroke-width=".7"/><rect x="1" y="15" width="16" height="4" fill="#8a8a8a"/>`;
const ROWS=[
 [['cut','copy','paste','pastet','pastew'],['find','replace'],['bul','num'],['-out','ind','quote'],['-undo','-redo'],['-link','-unlink','anchor','image','clean','help','html']],
 [['tabedit'],['-trow','-tcell'],['-irb','-ira','-drow'],['-icb','-ica','-dcol'],['-merge','-split'],['hr','erase','table'],['sub','sup'],['omega','ltr','rtl'],['full']],
 [['styles'],['-cite','-abbr','-acr','-del','-ins','attr'],['para','nbsp','layer','pb'],['date','time','prev'],['*fore','*hili'],['media']]];
const ico=k=>`<svg width="20" height="20" viewBox="0 0 20 20">${ICON[k]}</svg>`;
const btn=k=>{ if(k[0]==='*'){const c=k==='*fore'?FORE:HILI;return `<span class="bt sp"><svg width="20" height="20" viewBox="0 0 20 20">${c}</svg><svg class="a" width="7" height="4"><path d="M0 0h7L3.500 4z" fill="#666"/></svg></span>`;}
  const d=k[0]==='-';return `<span class="bt${d?' d':''}">${ico(d?k.slice(1):k)}</span>`};
const grp=g=>{const w=g[0][0]==='*'?g.length*32+1:g.length*22+1;return `<div class="g" style="width:${w}px">${g.map(btn).join('')}</div>`};
const combo=t=>`<div class="cb"><span>${t}</span><i><svg width="7" height="4"><path d="M0 0h7L3.500 4z" fill="#777"/></svg></i></div>`;
el('sw-editor',`:host{display:block;position:relative;height:177px;box-sizing:border-box;border:2px solid #dfe1e3;font-family:${FONT}}
 .o{height:173px;border:1px solid #adadad;background:#ededed;display:flex;flex-direction:column;box-sizing:border-box}
 .tb{padding:1px 0 4px 2px;display:flex;flex-direction:column;gap:5px;flex:none}
 .row{display:flex;gap:4px;height:21px}
 .g{height:21px;box-sizing:border-box;border:1px solid #b9b9b9;border-radius:2px;background:linear-gradient(#f4f4f4,#d6d6d6 50%,#efefef);display:flex;flex:none}
 .bt{flex:1;display:flex;align-items:center;justify-content:center;min-width:0}
 .bt svg{display:block;flex:none}
 .bt.d svg{opacity:.36}
 .bt.sp{gap:2px}
 .bt.sp svg.a{width:7px}
 .sep{width:1px;background:#b9b9b9;margin-right:-1px}
 .cb{width:83px;height:21px;display:flex;box-sizing:border-box;flex:none}
 .cb span{width:70px;box-sizing:border-box;background:#fff;border:1px solid #bbb;font-size:11px;line-height:20px;padding-left:4px;color:#000;white-space:nowrap;overflow:hidden}
 .cb i{width:13px;border:1px solid #bbb;border-left:0;background:linear-gradient(#f4f4f4,#d6d6d6 50%,#efefef);display:flex;align-items:center;justify-content:center}
 .ed{flex:1;background:#fff;border-top:1px solid #c8c8c8;border-bottom:1px solid #c8c8c8}
 .pa{height:19px;flex:none;font-size:12px;line-height:21px;padding-left:1px;color:#000;position:relative}
 .rz{position:absolute;right:0;bottom:0}
 .gl{position:absolute;right:9px;top:8px}`,
 ()=>`<div class="o"><div class="tb">
 <div class="row">${grp(['doc'])}${grp(['b','i','u','s'])}${grp(['al','ac','ar','aj'])}<div class="sep"></div>${combo('Vorlage')}${combo('Schriftart')}${combo('Schriftgröße')}</div>
 ${ROWS.map(r=>`<div class="row">${r.map(grp).join('')}</div>`).join('')}
 </div><div class="ed"></div><div class="pa">Pfad: p<svg class="rz" width="11" height="11"><path d="M10 1L1 10M10 4L4 10M10 7L7 10" stroke="#888"/></svg></div></div>
 <svg class="gl" width="16" height="16" viewBox="0 0 16 16"><circle cx="8" cy="8" r="8" fill="#2a93cc"/><path d="M5 1h6l2 1 1 4-3 2-4-1-2-3z" fill="#e6b422"/><path d="M7 7l6 0-2 5-2 3-1-4z" fill="#6fae3a"/></svg>`);

/* ---------- taskbar ---------- */
const X=c=>`<svg width="18" height="16" viewBox="0 0 18 16"><ellipse cx="9" cy="8" rx="8.500" ry="8" fill="#f4f6f8"/><path d="M5.500 4.500l7 7M12.500 4.500l-7 7" stroke="${c}" stroke-width="2.600"/></svg>`;
el('sw-task',`:host{display:flex;align-items:center;height:29px;box-sizing:border-box;margin-top:6px;padding:0 8px 0 14px;border-radius:4px;font-size:12.200px;color:#f4f7fa;text-shadow:0 1px 1px rgba(0,0,0,.3);background:linear-gradient(#8a9aa7,#aab6c0)}
 :host([active]){background:linear-gradient(#2fb0f5,#1672c6)}
 span{flex:1}`,t=>`<span><slot></slot></span>${X(t.hasAttribute('active')?'#1a7fd6':'#94a3af')}`);
el('sw-taskbar',`:host{display:flex;height:40px;flex:none;box-sizing:border-box;border-top:1px solid #a6c4dc;background:linear-gradient(#fff,#eaf1fa);font-family:${FONT}}
 .q{width:52px;display:flex;align-items:center;justify-content:center;flex:none}
 .bl{background:linear-gradient(#1a80d2,#2fb0f5)}
 .q+.q{margin-left:0}
 sw-task{flex:none}`,
 `<div class="q bl" style="width:52px"><svg width="17" height="18" viewBox="0 0 17 18"><path d="M1 1h7v16L1 15z" fill="#fff"/><path d="M9 7h3V3.500L17 9l-5 5.500V11H9z" fill="#fff"/></svg></div>
 <div class="q" style="width:54px"><svg width="20" height="16" viewBox="0 0 20 16"><rect x="6.500" y=".5" width="13" height="8" fill="#fff" stroke="#6b7b88"/><rect x="6" y="0" width="14" height="3" fill="#6b7b88"/><rect x=".5" y="5.500" width="13" height="10" fill="#fff" stroke="#6b7b88"/><rect x="0" y="5" width="14" height="3" fill="#6b7b88"/></svg></div>
 <div class="q bl" style="width:52px"><svg width="18" height="17" viewBox="0 0 18 17"><path d="M3 15a8 8 0 1 1 12 0z" fill="none" stroke="#fff" stroke-width="2"/><path d="M9 10l3-5" stroke="#fff" stroke-width="2"/></svg></div>
 <sw-task style="width:220px;margin-left:6px">Artikel-Übersicht - Alle Produkte</sw-task>
 <sw-task active style="width:207px;margin-left:10px">Artikeldetails : Fading Cookie</sw-task>`);
</script>
</body></html>
